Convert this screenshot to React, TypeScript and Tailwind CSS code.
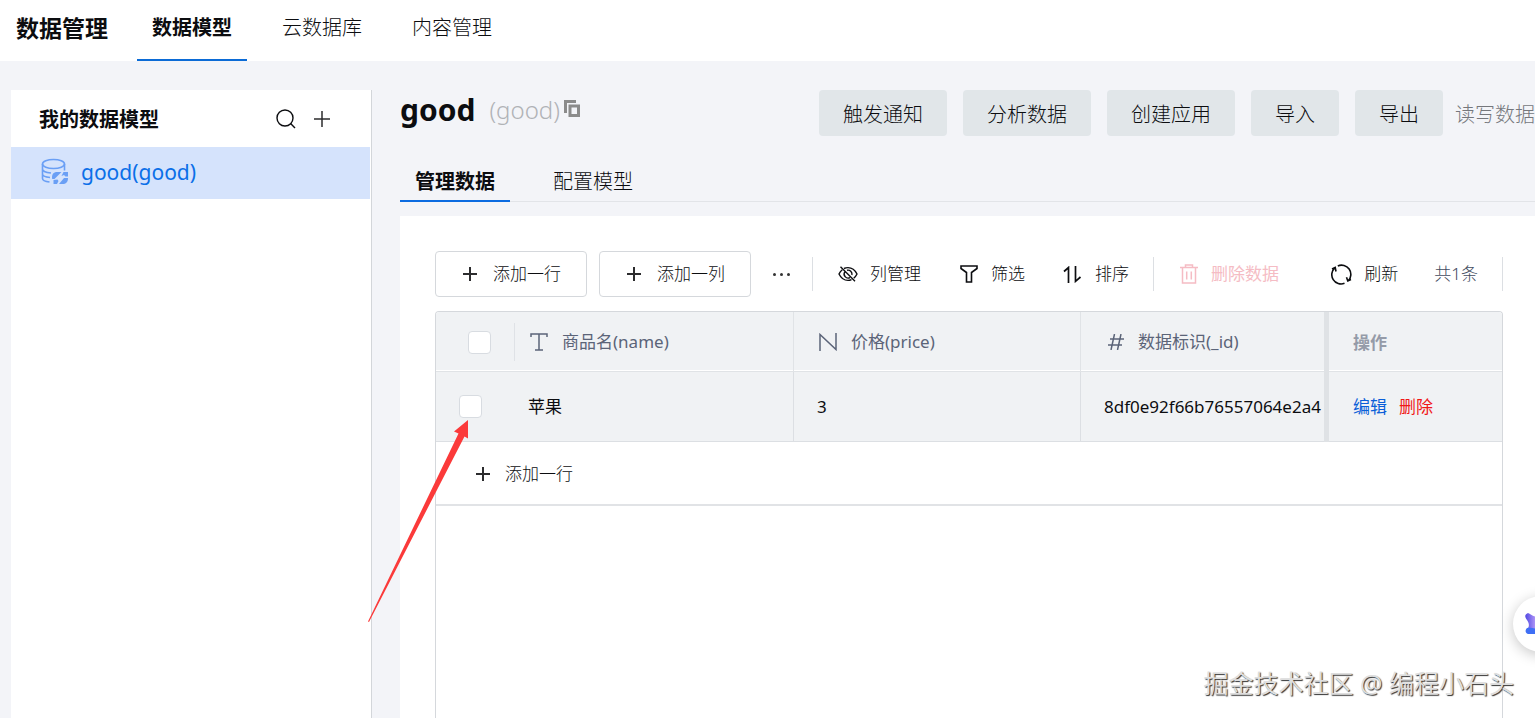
import type { ReactNode } from 'react';

const TOP_TABS = ['数据模型', '云数据库', '内容管理'];
const PAGE_TABS = ['管理数据', '配置模型'];
const ACTIONS = ['触发通知', '分析数据', '创建应用', '导入', '导出'];

const PlusIcon = ({ size = 14, stroke = 2 }: { size?: number; stroke?: number }) => (
  <svg width={size} height={size} viewBox={`0 0 ${size} ${size}`} stroke="#2c2c2e" strokeWidth={stroke} fill="none" aria-hidden="true">
    <path d={`M${size / 2} 0V${size}M0 ${size / 2}H${size}`} />
  </svg>
);

const SearchIcon = () => (
  <svg width="20" height="20" viewBox="0 0 20 20" fill="none" stroke="currentColor" strokeWidth="1.4" aria-hidden="true">
    <circle cx="9" cy="9" r="8" />
    <path d="M14.6 14.6 19 19" />
  </svg>
);

const DatabaseIcon = () => (
  <svg width="28" height="28" viewBox="0 0 28 28" fill="none" stroke="#6a9ff5" strokeWidth="1.6" aria-hidden="true">
    <ellipse cx="12.500" cy="6" rx="11" ry="4.500" />
    <path d="M1.500 6v14.500c0 1.500 3 3 7 3.500M23.500 6v6.500M1.500 11c0 1.800 3.500 3.500 8.500 4M1.500 16c0 1.500 3 3 7.500 3.500" />
    <path d="M11 19.500c0-3.800 2-5.500 5.500-5.500h4L16 18.500l-2.500 2.500h-2.300Z" fill="#6a9ff5" stroke="none" />
    <path d="M22.500 14H27v4.500h-2.500l-1.500-1.500-2.500 1Z" fill="#6a9ff5" stroke="none" />
    <path d="M27 20c0 4-2 6-5.500 6h-3.500l5-6ZM12.500 22l4-.5 1 1.500-1.500 3h-3.500Z" fill="#6a9ff5" stroke="none" />
  </svg>
);

const CopyIcon = () => (
  <svg width="16" height="17" viewBox="0 0 16 17" fill="none" stroke="#8b8b8b" aria-hidden="true">
    <path d="M1.500 13V1.500H12" strokeWidth="3" />
    <path d="M6 6h8.500v9.500H6Z" strokeWidth="3" />
  </svg>
);

const EyeOffIcon = () => (
  <svg width="20" height="16" viewBox="0 0 20 16" fill="none" stroke="currentColor" strokeWidth="1.4" aria-hidden="true">
    <path d="M6 2.500C7.200 1.900 8.500 1.600 10 1.600c4.300 0 7.300 2.900 9 6.400-.8 1.700-1.900 3.100-3.300 4.200M13.500 13.600c-1.100.5-2.200.8-3.500.8-4.300 0-7.300-2.900-9-6.400.8-1.700 1.900-3.200 3.300-4.300" />
    <path d="M7 5.600a4 4 0 0 0 5 6M9 4.300a4 4 0 0 1 4.900 4.700M2.500 0.800 17 15.300" />
  </svg>
);

const FilterIcon = () => (
  <svg width="20" height="18" viewBox="0 0 20 18" fill="none" stroke="currentColor" strokeWidth="1.600" aria-hidden="true">
    <path d="M2 1h16v2.500l-5.500 4V17h-5V7.500L2 3.500Z" />
  </svg>
);

const SortIcon = () => (
  <svg width="20" height="17" viewBox="0 0 20 17" fill="none" stroke="currentColor" strokeWidth="1.700" aria-hidden="true">
    <path d="M1 5.500 5.500 1.500V17M12.500 0v15.300L17.500 11" />
  </svg>
);

const TrashIcon = () => (
  <svg width="20" height="20" viewBox="0 0 20 20" fill="none" stroke="currentColor" strokeWidth="1.500" aria-hidden="true">
    <path d="M1 3.500h18M6.500 3.500V1h7v2.500M3.500 3.500V19h13V3.500M7.700 7.500v8M12.300 7.500v8" />
  </svg>
);

const RefreshIcon = () => (
  <svg width="21" height="21" viewBox="0 0 21 21" fill="none" stroke="currentColor" strokeWidth="1.600" aria-hidden="true">
    <path d="M3.800 3.800A9.300 9.300 0 0 0 13.500 19.300M6.800 1.900A9.300 9.300 0 0 1 17.300 16.800" />
    <path d="M1 5 4.200 3.500 5 7.500M20 15.500 16.800 17 15.500 13.200" />
  </svg>
);

const TextTypeIcon = () => (
  <svg width="18" height="18" viewBox="0 0 18 18" fill="none" stroke="currentColor" strokeWidth="1.500" aria-hidden="true">
    <path d="M1 4V1h16v3M9 1v16M5 17h8" />
  </svg>
);

const NumberTypeIcon = () => (
  <svg width="18" height="18" viewBox="0 0 18 18" fill="none" stroke="currentColor" strokeWidth="1.500" aria-hidden="true">
    <path d="M1 18V1.500L17 16.500V0" />
  </svg>
);

const HashIcon = () => (
  <svg width="16" height="16" viewBox="0 0 16 16" fill="none" stroke="currentColor" strokeWidth="1.500" aria-hidden="true">
    <path d="M2 5h14M0 11h14M6.500 0 3 16M13 0 9.500 16" />
  </svg>
);

const Divider = () => <span className="h-[34px] w-px shrink-0 bg-[#dcdfe3]" />;

function ToolButton({ icon, label, disabled = false }: { icon: ReactNode; label: string; disabled?: boolean }) {
  return (
    <button type="button" disabled={disabled} className="flex shrink-0 items-center gap-3 disabled:font-normal disabled:text-[#f5bcc4]">
      {icon}
      {label}
    </button>
  );
}

function Checkbox({ label }: { label: string }) {
  return (
    <input
      type="checkbox"
      aria-label={label}
      className="block size-[23px] appearance-none rounded border border-[#d8dce1] bg-white checked:bg-[#006eff]"
    />
  );
}

function ColumnTitle({ icon, children }: { icon: ReactNode; children: ReactNode }) {
  return (
    <span className="flex items-center gap-3.5 whitespace-nowrap font-normal">
      {icon}
      {children}
    </span>
  );
}

function Header() {
  return (
    <header className="flex h-[61px] shrink-0 items-start bg-white pl-4">
      <h1 className="w-[121px] pt-3 text-[23px] leading-8 font-bold">数据管理</h1>
      <nav className="flex gap-5 text-xl">
        {TOP_TABS.map((tab, i) => (
          <a
            key={tab}
            href="#"
            className={
              i === 0
                ? 'h-[61px] border-b-2 border-[#0b6bd6] px-[15px] pt-3 leading-8 font-bold'
                : 'h-[61px] px-[15px] pt-3 leading-8'
            }
          >
            {tab}
          </a>
        ))}
      </nav>
    </header>
  );
}

function Sidebar() {
  return (
    <aside className="w-[361px] shrink-0 border-r border-[#d3d6da] bg-white pr-px">
      <div className="flex h-[57px] items-center pr-10 pl-7">
        <h2 className="flex-1 pt-[3px] text-xl font-bold">我的数据模型</h2>
        <button type="button" aria-label="搜索" className="mr-[18px]">
          <SearchIcon />
        </button>
        <button type="button" aria-label="新建">
          <PlusIcon size={16} stroke={1.5} />
        </button>
      </div>
      <a href="#" className="flex h-[52px] items-center gap-3 bg-[#d5e3fc] pb-0.5 pl-[30px] text-[21px] leading-7 font-normal text-[#0b6fe8]">
        <DatabaseIcon />
        good(good)
      </a>
    </aside>
  );
}

function TitleBar() {
  return (
    <div className="flex h-[46px] items-center">
      <div className="flex h-10 items-center self-start">
        <h2 className="text-[30px] leading-9 font-bold">good</h2>
        <span className="ml-3.5 text-2xl text-[#b0b2b6]">(good)</span>
        <button type="button" aria-label="复制" className="ml-1 pb-1">
          <CopyIcon />
        </button>
      </div>
      <div className="ml-auto flex shrink-0 items-center gap-4 text-xl">
        {ACTIONS.map((action) => (
          <button key={action} type="button" className="h-[46px] rounded bg-[#e1e6e9] px-6 pt-[3px] whitespace-nowrap">
            {action}
          </button>
        ))}
        <span className="-ml-1 pt-[3px] text-[#75777c]">读写数据</span>
      </div>
    </div>
  );
}

function Toolbar() {
  return (
    <div className="flex h-[46px] items-center text-[17px] whitespace-nowrap">
      {['添加一行', '添加一列'].map((label) => (
        <button
          key={label}
          type="button"
          className="mr-3 flex h-[46px] w-[152px] shrink-0 items-center gap-4 rounded border border-[#d5d8dc] pl-[27px]"
        >
          <PlusIcon />
          {label}
        </button>
      ))}
      <button type="button" aria-label="更多" className="mx-2.5 flex gap-1">
        <span className="size-[3px] rounded-full bg-[#333]" />
        <span className="size-[3px] rounded-full bg-[#333]" />
        <span className="size-[3px] rounded-full bg-[#333]" />
      </button>
      <div className="flex flex-1 items-center pl-3">
        <Divider />
        <div className="flex gap-[38px] pr-6 pl-[25px]">
          <ToolButton icon={<EyeOffIcon />} label="列管理" />
          <ToolButton icon={<FilterIcon />} label="筛选" />
          <ToolButton icon={<SortIcon />} label="排序" />
        </div>
        <Divider />
        <div className="flex flex-1 items-center pr-6 pl-[25px]">
          <ToolButton icon={<TrashIcon />} label="删除数据" disabled />
          <div className="ml-auto flex items-center gap-9">
            <ToolButton icon={<RefreshIcon />} label="刷新" />
            <span className="text-[#424b60]">共1条</span>
          </div>
        </div>
        <Divider />
      </div>
    </div>
  );
}

function DataTable() {
  return (
    <div className="flex-1 overflow-hidden rounded-t border border-b-0 border-[#d5d8dc]">
      <table className="w-full table-fixed border-separate border-spacing-0 text-left text-[17px]">
        <colgroup>
          <col className="w-[79px]" />
          <col className="w-[279px]" />
          <col className="w-[287px]" />
          <col />
          <col className="w-[173px]" />
        </colgroup>
        <thead className="bg-[#f0f2f4] text-[#5b6478]">
          <tr className="h-[60px]">
            <th className="border-b border-[#e0e3e6] p-0 shadow-[inset_0_-1px_0_#fff]">
              <div className="flex h-[38px] items-center border-r border-[#dfe2e6] pt-0.5 pl-8">
                <Checkbox label="全选" />
              </div>
            </th>
            <th className="border-r border-b border-[#e0e3e6] py-0 pl-[15px] shadow-[inset_0_-1px_0_#fff]">
              <ColumnTitle icon={<TextTypeIcon />}>商品名(name)</ColumnTitle>
            </th>
            <th className="border-r border-b border-[#e0e3e6] py-0 pl-[25px] shadow-[inset_0_-1px_0_#fff]">
              <ColumnTitle icon={<NumberTypeIcon />}>价格(price)</ColumnTitle>
            </th>
            <th className="border-b border-[#e0e3e6] py-0 pl-[27px] shadow-[inset_0_-1px_0_#fff]">
              <ColumnTitle icon={<HashIcon />}>数据标识(_id)</ColumnTitle>
            </th>
            <th className="border-b border-[#e0e3e6] py-0 pt-0.5 pl-6 font-bold text-[#959ba8] shadow-[inset_0_-1px_0_#fff,-5px_0_0_#dfe2e5]">
              操作
            </th>
          </tr>
        </thead>
        <tbody>
          <tr className="h-[70px] bg-[#f0f2f4]">
            <td className="border-b border-[#dcdfe3] py-0 pl-[23px]">
              <Checkbox label="选择 苹果" />
            </td>
            <td className="border-r border-b border-[#dcdfe3] py-0 pl-[13px] font-normal">苹果</td>
            <td className="border-r border-b border-[#dcdfe3] py-0 pl-[23px] font-normal">3</td>
            <td className="border-b border-[#dcdfe3] py-0 pl-[23px] font-normal whitespace-nowrap">8df0e92f66b76557064e2a4</td>
            <td className="border-b border-[#dcdfe3] py-0 pl-6 shadow-[-5px_0_0_#dfe2e5]">
              <div className="flex gap-3 font-normal">
                <button type="button" className="text-[#0a5fd8]">编辑</button>
                <button type="button" className="text-[#f01818]">删除</button>
              </div>
            </td>
          </tr>
        </tbody>
      </table>
      <button type="button" className="flex h-16 w-full items-center gap-[15px] border-b-2 border-[#e1e3e6] pt-0.5 pl-10 text-[17px]">
        <PlusIcon />
        添加一行
      </button>
    </div>
  );
}

function Arrow() {
  return (
    <svg className="pointer-events-none absolute top-[420px] left-[368px]" width="101" height="202" viewBox="0 0 101 202" aria-hidden="true">
      <path d="M0 201.500 90.500 13.500 86 11.500 100 0V18.500L96.500 16.500 1 202Z" fill="#fb3a3a" />
    </svg>
  );
}

function AssistantBubble() {
  return (
    <button
      type="button"
      aria-label="助手"
      className="absolute top-[596px] -right-[34px] flex size-14 items-center rounded-full bg-white pl-3 shadow-[0_3px_14px_rgba(0,0,0,0.22)]"
    >
      <svg width="28" height="22" viewBox="0 0 28 22" aria-hidden="true">
        <defs>
          <linearGradient id="bubble" x1="0" y1="0" x2="1" y2="0">
            <stop offset="0" stopColor="#5148e2" />
            <stop offset="0.4" stopColor="#b49af8" />
          </linearGradient>
        </defs>
        <path d="M3 0C6 1 8 4 14 4s8-3 11-4c3 2 2 5 0 8-2 4-2 6 1 9H2c3-4 2-7 0-10S-1 2 3 0Z" fill="url(#bubble)" />
        <path d="M2 15c5-1 8 1 12 1s7-2 12-1c2 2 2 5-1 6H3c-3-1-3-4-1-6Z" fill="#3f6ff5" />
      </svg>
    </button>
  );
}

export default function App() {
  return (
    <div className="relative flex min-h-screen flex-col overflow-hidden bg-[#f3f4f8] font-['Noto_Sans','Noto_Sans_CJK_SC',sans-serif] font-light text-[#0c0d10]">
      <Header />
      <div className="flex flex-1 pt-[29px] pl-[11px]">
        <Sidebar />
        <main className="ml-7 flex min-w-0 flex-1 flex-col">
          <TitleBar />
          <nav className="mt-6 flex gap-7 border-b border-[#e2e4e8] text-xl leading-[37px]">
            {PAGE_TABS.map((tab, i) => (
              <a
                key={tab}
                href="#"
                className={i === 0 ? '-mb-px border-b-2 border-[#0b6be0] px-[15px] pt-[3px] font-bold' : 'px-[15px] pt-[3px]'}
              >
                {tab}
              </a>
            ))}
          </nav>
          <section className="mt-3.5 flex flex-1 flex-col gap-3.5 bg-white pt-[35px] pr-8 pl-[35px]">
            <Toolbar />
            <DataTable />
          </section>
        </main>
      </div>
      <Arrow />
      <AssistantBubble />
      <p className="absolute right-[21px] bottom-[17px] text-[25px] leading-9 font-normal text-[#dedede] [text-shadow:1px_1px_1px_#333]">
        掘金技术社区 @ 编程小石头
      </p>
    </div>
  );
}
